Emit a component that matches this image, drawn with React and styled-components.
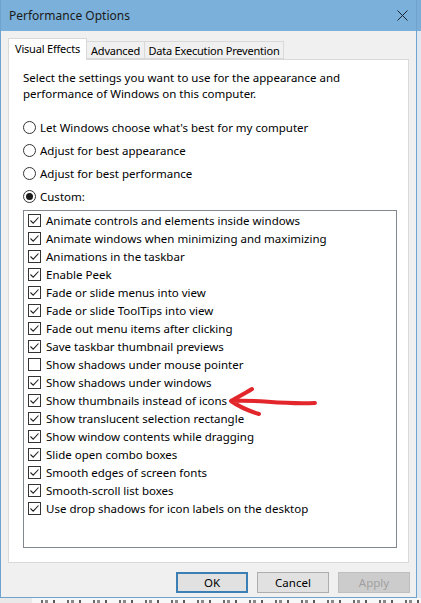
import React from 'react';
import styled, { createGlobalStyle } from 'styled-components';

const GlobalStyle = createGlobalStyle`
  body {
    margin: 0;
    background: #ffffff;
    font-family: 'Noto Sans', 'Liberation Sans', sans-serif;
  }
`;

const Desktop = styled.div`
  width: 421px;
  height: 603px;
  overflow: hidden;
  display: flex;
  flex-direction: column;
  position: relative;
  background: #fff;
`;

const TopRow = styled.div`
  display: flex;
  height: 598px;
`;

const SideStrip = styled.div`
  width: 4px;
  background: linear-gradient(#7aaed6 0 31px, #dfe8f0 31px);
`;

const BottomStrip = styled.div`
  height: 5px;
  background:
    repeating-linear-gradient(90deg, transparent 0 7px, #6b6b6b 7px 9px, transparent 9px 11px, #8a8a8a 11px 14px, transparent 14px 19px, #5a5a5a 19px 21px, transparent 21px 26px),
    linear-gradient(90deg, #e9e9e9 0 32px, #f7f7f7 32px);
  background-size: calc(100% - 34px) 3px, 100% 100%;
  background-repeat: no-repeat;
  background-position: 34px 2px, 0 0;
`;

const Window = styled.div`
  width: 417px;
  box-sizing: border-box;
  border: 1px solid #6ea3cf;
  border-top: none;
  display: flex;
  flex-direction: column;
  background: #f0f0f0;
`;

const TitleBar = styled.div`
  height: 31px;
  background: #7ab0d9;
  display: flex;
  align-items: center;
  justify-content: space-between;
  padding: 0 8px 0 8px;
  font-size: 12px;
  color: #1a1a1a;
`;

const CloseButton = styled.div`
  width: 11px;
  height: 11px;
  display: flex;
`;

const Body = styled.div`
  flex: 1;
  padding: 7px 7px 0 7px;
  display: flex;
  flex-direction: column;
`;

const TabStrip = styled.div`
  display: flex;
  align-items: flex-end;
  height: 21px;
  position: relative;
  z-index: 1;
`;

const Tab = styled.div`
  box-sizing: border-box;
  height: ${(p) => (p.$active ? '22px' : '18px')};
  padding-bottom: ${(p) => (p.$active ? '3px' : '0')};
  margin-bottom: ${(p) => (p.$active ? '-1px' : '0')};
  display: flex;
  align-items: center;
  justify-content: center;
  white-space: nowrap;
  font-size: 11px;
  letter-spacing: -0.2px;
  color: #000;
  background: ${(p) => (p.$active ? '#ffffff' : '#f0f0f0')};
  border: 1px solid #d9d9d9;
  border-bottom: ${(p) => (p.$active ? 'none' : '1px solid #d9d9d9')};
  border-left: ${(p) => (p.$first || p.$active ? '1px solid #d9d9d9' : 'none')};
  width: ${(p) => p.$width}px;
`;

const Panel = styled.div`
  width: 401px;
  height: 504px;
  box-sizing: border-box;
  background: #fff;
  border: 1px solid #d9d9d9;
  padding: 10px 12px 0 14px;
  display: flex;
  flex-direction: column;
`;

const Description = styled.p`
  margin: 0 0 14px;
  font-size: 11.5px;
  line-height: 16px;
  color: #000;
  width: 322px;
`;

const RadioRow = styled.label`
  display: flex;
  align-items: center;
  height: 23px;
  gap: 4px;
  font-size: 11.5px;
  color: #000;
`;

const RadioCircle = styled.span`
  width: 13px;
  height: 13px;
  box-sizing: border-box;
  border-radius: 50%;
  border: 1px solid #333;
  display: flex;
  align-items: center;
  justify-content: center;
  &::after {
    content: '';
    width: 7px;
    height: 7px;
    border-radius: 50%;
    background: ${(p) => (p.$checked ? '#1a1a1a' : 'transparent')};
  }
`;

const ListBox = styled.div`
  margin-top: 2px;
  width: 374px;
  height: 338px;
  box-sizing: border-box;
  border: 1px solid #828790;
  background: #fff;
  padding: 0 0 0 4px;
`;

const CheckRow = styled.div`
  display: flex;
  align-items: center;
  height: 18px;
  gap: 5px;
  font-size: 11.5px;
  color: #000;
  white-space: nowrap;
`;

const CheckBox = styled.span`
  width: 13px;
  height: 13px;
  box-sizing: border-box;
  border: 1px solid #333;
  background: #fff;
  display: flex;
  svg {
    display: block;
  }
`;

const ButtonBar = styled.div`
  display: flex;
  justify-content: flex-end;
  gap: 9px;
  padding: 9px 0 0 0;
  width: 402px;
`;

const Button = styled.div`
  width: 72px;
  height: 21px;
  box-sizing: border-box;
  display: flex;
  align-items: center;
  justify-content: center;
  font-size: 11.5px;
  color: ${(p) => (p.$disabled ? '#a0a0a0' : '#000')};
  background: ${(p) => (p.$disabled ? '#cccccc' : '#e1e1e1')};
  border: ${(p) => (p.$default ? '2px solid #3b7fb5' : p.$disabled ? '1px solid #bfbfbf' : '1px solid #adadad')};
`;

const Annotation = styled.svg`
  position: absolute;
  left: 226px;
  top: 384px;
  pointer-events: none;
`;

const options = [
  ['Animate controls and elements inside windows', true],
  ['Animate windows when minimizing and maximizing', true],
  ['Animations in the taskbar', true],
  ['Enable Peek', true],
  ['Fade or slide menus into view', true],
  ['Fade or slide ToolTips into view', true],
  ['Fade out menu items after clicking', true],
  ['Save taskbar thumbnail previews', true],
  ['Show shadows under mouse pointer', false],
  ['Show shadows under windows', true],
  ['Show thumbnails instead of icons', true],
  ['Show translucent selection rectangle', true],
  ['Show window contents while dragging', true],
  ['Slide open combo boxes', true],
  ['Smooth edges of screen fonts', true],
  ['Smooth-scroll list boxes', true],
  ['Use drop shadows for icon labels on the desktop', true],
];

const radios = [
  ["Let Windows choose what's best for my computer", false],
  ['Adjust for best appearance', false],
  ['Adjust for best performance', false],
  ['Custom:', true],
];

const Check = ({ checked }) => (
  <CheckBox>
    {checked && (
      <svg width="11" height="11" viewBox="0 0 11 11">
        <path d="M1.5 5.5 L4.2 8.2 L9.5 2.5" fill="none" stroke="#222" strokeWidth="1.1" />
      </svg>
    )}
  </CheckBox>
);

const App = () => (
  <>
    <GlobalStyle />
    <Desktop>
      <TopRow>
        <Window>
          <TitleBar>
            <span>Performance Options</span>
            <CloseButton>
              <svg width="11" height="11" viewBox="0 0 11 11">
                <path d="M0.5 0.5 L10.5 10.5 M10.5 0.5 L0.5 10.5" stroke="#1a2330" strokeWidth="1" />
              </svg>
            </CloseButton>
          </TitleBar>
          <Body>
            <TabStrip>
              <Tab $active $first $width={79}>Visual Effects</Tab>
              <Tab $width={58}>Advanced</Tab>
              <Tab $width={139}>Data Execution Prevention</Tab>
            </TabStrip>
            <Panel>
              <Description>
                Select the settings you want to use for the appearance and performance of Windows on this
                computer.
              </Description>
              {radios.map(([label, checked]) => (
                <RadioRow key={label}>
                  <RadioCircle $checked={checked} />
                  {label}
                </RadioRow>
              ))}
              <ListBox>
                {options.map(([label, checked]) => (
                  <CheckRow key={label}>
                    <Check checked={checked} />
                    {label}
                  </CheckRow>
                ))}
              </ListBox>
            </Panel>
            <ButtonBar>
              <Button $default>OK</Button>
              <Button>Cancel</Button>
              <Button $disabled>Apply</Button>
            </ButtonBar>
          </Body>
        </Window>
        <SideStrip />
      </TopRow>
      <BottomStrip />
      <Annotation width="95" height="34" viewBox="0 0 95 34">
        <path
          d="M6 17 C 30 15, 55 21, 89 19 M26 5 C 18 10, 10 14, 5 17 C 12 22, 20 26, 33 30"
          fill="none"
          stroke="#e3262b"
          strokeWidth="4"
          strokeLinecap="round"
          strokeLinejoin="round"
        />
      </Annotation>
    </Desktop>
  </>
);

export default App;
